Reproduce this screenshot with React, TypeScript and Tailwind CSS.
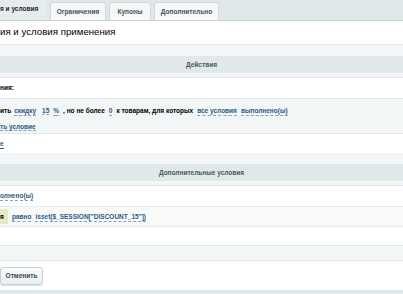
import type { ReactNode } from "react";

const Dash = ({ children }: { children: ReactNode }) => (
  <span className="text-[#2b5a84] border-b border-dashed border-[#8aa0b4] leading-[9px]">{children}</span>
);

const SectionHead = ({ title }: { title: string }) => (
  <div className="bg-[#f3f6f7]">
    <div className="h-[11px]" />
    <div className="h-[17px] bg-[#e0e8ea] flex items-center justify-center text-[6.5px] font-bold text-[#4c585c]">
      {title}
    </div>
    <div className="h-[5px] border-b border-[#e2e7e9]" />
  </div>
);

export default function App() {
  return (
    <div className="w-[403px] h-[294px] overflow-hidden bg-white font-['Liberation_Sans',Arial,sans-serif] text-black">
      {/* tabs */}
      <div className="h-[21px] bg-[#dfe7e9] border-b border-[#cbd4d7] flex items-end gap-[3px] text-[6.5px] font-bold">
        <div className="h-[20px] w-[47px] bg-[#e6ecee] rounded-tr-[3px] flex items-start pt-[4px] text-[#1f2a2e]">
          я и условия
        </div>
        <div className="h-[18px] w-[56px] justify-center bg-[#f5f7f8] border border-b-0 border-[#d2dadd] rounded-t-[3px] flex items-center text-[#485357]">
          Ограничения
        </div>
        <div className="h-[18px] w-[42px] justify-center bg-[#f5f7f8] border border-b-0 border-[#d2dadd] rounded-t-[3px] flex items-center text-[#485357]">
          Купоны
        </div>
        <div className="h-[18px] w-[65px] justify-center bg-[#f5f7f8] border border-b-0 border-[#d2dadd] rounded-t-[3px] flex items-center text-[#485357]">
          Дополнительно
        </div>
      </div>

      {/* title */}
      <div className="h-[24px] flex items-center text-[9.7px] border-b border-[#e4e9ea]">
        ия и условия применения
      </div>

      <SectionHead title="Действия" />

      <div className="h-[21px] flex items-center text-[6.5px] font-bold border-b border-[#e2e7e9]">ния:</div>

      <div className="h-[35px] bg-[#f3f6f7] border-b border-[#e2e7e9] text-[6.5px] font-bold flex flex-col pt-[7px] gap-[6px]">
        <div className="flex items-center gap-[4px] whitespace-nowrap">
          <span className="mr-[-1px]">ить</span>
          <Dash>скидку</Dash>
          <span className="ml-[2px]">
            <Dash>15</Dash>
          </span>
          <Dash>%</Dash>
          <span>, но не более</span>
          <Dash>0</Dash>
          <span>к товарам, для которых</span>
          <Dash>все условия</Dash>
          <Dash>выполнено(ы)</Dash>
        </div>
        <div>
          <Dash>ть условие</Dash>
        </div>
      </div>

      <div className="h-[19px] flex items-center text-[6.5px] font-bold">
        <span className="text-[#2b5a84] border-b border-[#2b5a84] leading-[9px]">е</span>
      </div>

      <SectionHead title="Дополнительные условия" />

      <div className="h-[20px] flex items-center text-[6.5px] font-bold">
        <Dash>олнено(ы)</Dash>
      </div>

      <div className="h-[21px] bg-[#f8fafa] border-y border-[#e6eaeb] flex items-center gap-[4px] text-[6.5px] font-bold">
        <div className="h-[15px] w-[8px] bg-[#e6e9c6] flex items-center">я</div>
        <Dash>равно</Dash>
        <Dash>isset($_SESSION["DISCOUNT_15"])</Dash>
      </div>

      <div className="h-[19px] border-b border-[#e2e6e8]" />
      <div className="h-[15px] bg-[#f3f6f7] border-b border-[#e2e6e8]" />

      <div className="h-[29px] flex items-center">
        <button className="h-[18px] w-[43px] rounded-[3px] border border-[#c9d0d3] bg-gradient-to-b from-[#fbfcfc] to-[#e9eef0] shadow-[0_1px_1px_rgba(0,0,0,0.15)] text-[6.5px] font-bold text-[#3c4649]">
          Отменить
        </button>
      </div>
      <div className="h-[4px] bg-[#dfe9eb]" />
    </div>
  );
}
